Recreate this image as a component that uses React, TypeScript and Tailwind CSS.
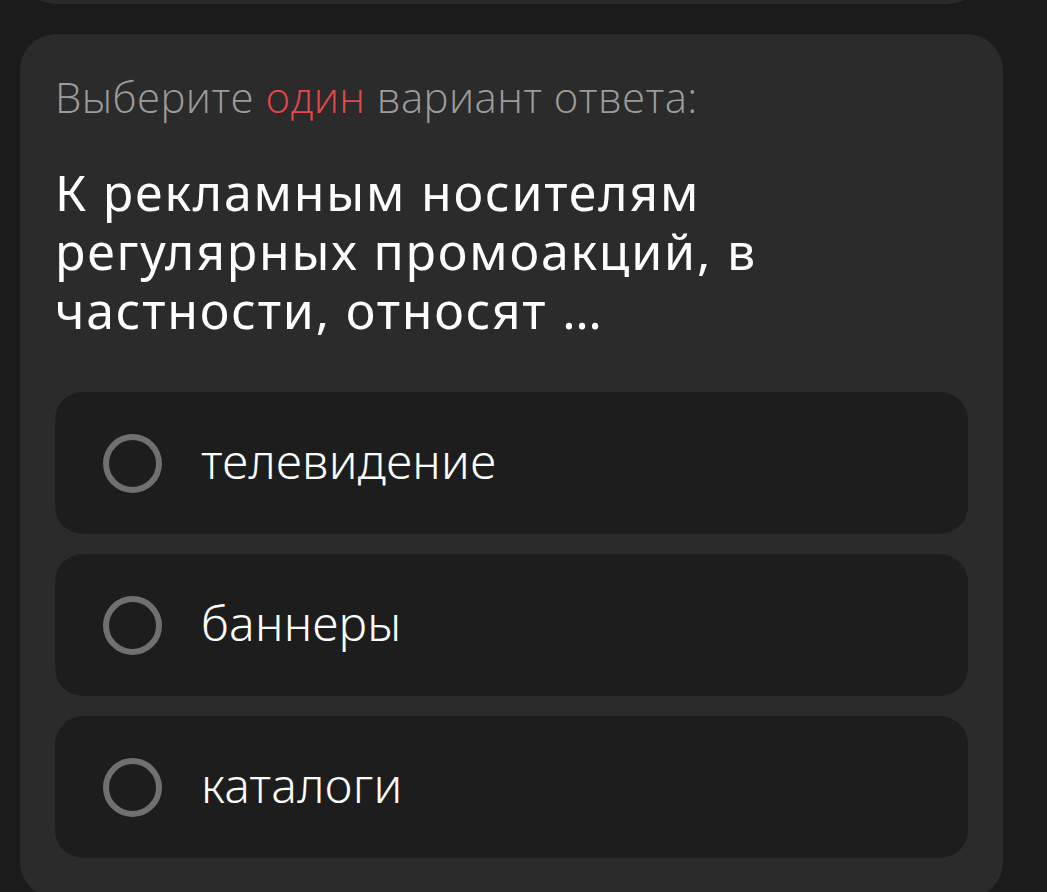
import { useState } from 'react'

const options = ['телевидение', 'баннеры', 'каталоги']

function Option({ label, checked, onPick }: { label: string; checked: boolean; onPick: () => void }) {
  return (
    <button
      onClick={onPick}
      className="flex h-[142px] w-full items-center rounded-[28px] bg-[#1d1d1d] pl-[48px] text-left"
    >
      <span className="flex size-[59px] shrink-0 items-center justify-center rounded-full border-[6px] border-[#707070]">
        {checked && <span className="size-[27px] rounded-full bg-[#707070]" />}
      </span>
      <span className="ml-[39px] pb-[4px] text-[48px] leading-none font-light tracking-[0.3px] text-white [font-family:'Noto_Sans',sans-serif]">
        {label}
      </span>
    </button>
  )
}

export default function App() {
  const [picked, setPicked] = useState<number | null>(null)

  return (
    <div className="h-[892px] overflow-hidden bg-[#1b1b1b] pl-[20px] pr-[44px]">
      {/* previous card, cut off at the top */}
      <div className="-mt-[40px] mr-[20px] h-[44px] rounded-b-[36px] bg-[#2b2b2b]" />

      <section className="mt-[30px] rounded-[36px] bg-[#2b2b2b] px-[35px] pt-[38px] pb-[40px]">
        <p className="text-[42px] leading-[1.2] font-light tracking-[0.4px] text-[#9c9c9c] [font-family:'Open_Sans',sans-serif]">
          Выберите <span className="text-[#e4474c]">один</span> вариант ответа:
        </p>

        <h2 className="mt-[41px] max-w-[760px] text-[50px] leading-[59px] tracking-[1.8px] text-white [font-family:'Noto_Sans',sans-serif]">
          К рекламным носителям регулярных промоакций, в частности, относят …
        </h2>

        <div className="mt-[52px] flex flex-col gap-[20px]">
          {options.map((o, i) => (
            <Option key={o} label={o} checked={picked === i} onPick={() => setPicked(i)} />
          ))}
        </div>
      </section>
    </div>
  )
}
